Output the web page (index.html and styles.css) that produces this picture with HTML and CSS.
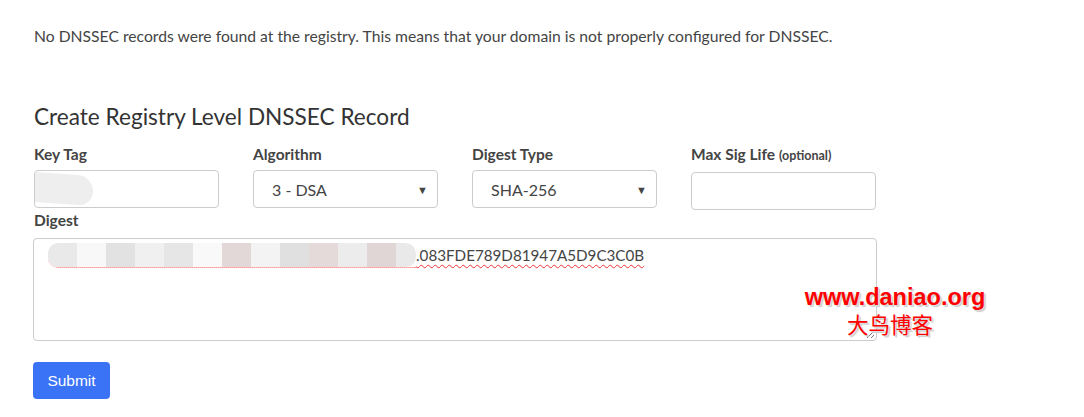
FILE: index.html
```html
<!DOCTYPE html>
<html>
<head>
<meta charset="utf-8">
<link rel="stylesheet" href="styles.css">
</head>
<body>
<div class="page">
  <p class="notice">No DNSSEC records were found at the registry. This means that your domain is not properly configured for DNSSEC.</p>
  <h2 class="title">Create Registry Level DNSSEC Record</h2>
  <div class="row">
    <div class="col">
      <div class="label">Key Tag</div>
      <div class="field"><span class="blob-key"></span></div>
    </div>
    <div class="col">
      <div class="label">Algorithm</div>
      <div class="field select"><span class="val">3 - DSA</span><span class="arrow">&#9660;</span></div>
    </div>
    <div class="col">
      <div class="label">Digest Type</div>
      <div class="field select"><span class="val">SHA-256</span><span class="arrow">&#9660;</span></div>
    </div>
    <div class="col">
      <div class="label">Max Sig Life <span class="opt">(optional)</span></div>
      <div class="field"></div>
    </div>
  </div>
  <div class="label digest-label">Digest</div>
  <div class="textarea">
    <div class="digest-line">
      <span class="blobs">
        <i class="b1"></i><i class="b2"></i><i class="b3"></i><i class="b4"></i><i class="b5"></i><i class="b6"></i><i class="b7"></i><i class="b8"></i><i class="b9"></i><i class="b10"></i><i class="b11"></i><i class="b12"></i><i class="b13"></i>
      </span><span class="digest-text">.083FDE789D81947A5D9C3C0B</span>
    </div>
    <svg class="grip" width="10" height="10" viewBox="0 0 10 10"><path d="M9 2 L2 9 M9 6 L6 9" stroke="#777" stroke-width="1"/></svg>
  </div>
  <button class="submit">Submit</button>
  <div class="watermark">
    <div class="wm-url">www.daniao.org</div>
    <div class="wm-cn">大鸟博客</div>
  </div>
</div>
</body>
</html>
```

FILE: styles.css
```css
html, body {
  margin: 0;
  background: #fff;
}
.page {
  position: relative;
  padding: 26px 0 0 34px;
  font-family: "Lato", "Liberation Sans", sans-serif;
  color: #444;
  width: 843px;
}
.notice {
  margin: 0;
  font-size: 15.7px;
  line-height: 20px;
  color: #444;
  white-space: nowrap;
}
.title {
  margin: 57px 0 0 0;
  font-size: 22.6px;
  line-height: 28px;
  font-weight: 400;
  color: #333;
}
.row {
  display: flex;
  gap: 34px;
  margin-top: 13px;
}
.col {
  width: 185px;
}
.label {
  font-size: 15.5px;
  line-height: 20px;
  font-weight: 700;
  color: #444;
  white-space: nowrap;
}
.opt {
  font-size: 12.5px;
  font-weight: 700;
}
.field {
  box-sizing: border-box;
  height: 38px;
  margin-top: 6px;
  border: 1px solid #ccc;
  border-radius: 4px;
  background: #fff;
  position: relative;
  overflow: hidden;
}
.select {
  display: flex;
  align-items: center;
  justify-content: space-between;
  padding: 0 9px 0 18px;
  font-size: 16px;
  color: #444;
}
.arrow {
  font-size: 11px;
  color: #444;
}
.blob-key {
  position: absolute;
  left: -4px;
  top: 3px;
  width: 62px;
  height: 30px;
  background: #eee;
  border-radius: 4px 16px 16px 4px;
  transform: skewY(4deg);
}
.digest-label {
  margin-top: 0;
}
.textarea {
  box-sizing: border-box;
  position: relative;
  height: 103px;
  width: 844px;
  margin-top: 8px;
  margin-left: -1px;
  border: 1px solid #ccc;
  border-radius: 4px;
  padding: 4px 0 0 14px;
}
.digest-line {
  display: flex;
  align-items: center;
  height: 24px;
}
.blobs {
  display: flex;
  height: 24px;
  border-bottom: 1px dotted #f55;
  border-radius: 10px 10px 0 10px;
  overflow: hidden;
}
.blobs i {
  display: block;
  width: 29px;
  height: 24px;
}
.b1 { background: #e9e9e9; }
.b2 { background: #f8f8f8; }
.b3 { background: #e2e2e2; }
.b4 { background: #f0f0f0; }
.b5 { background: #e6e6e6; }
.b6 { background: #f9f9f9; }
.b7 { background: #e3d8d8; }
.b8 { background: #f3f3f3; }
.b9 { background: #e0e0e0; }
.b10 { background: #e5dada; }
.b11 { background: #ececec; }
.b12 { background: #e1d6d6; }
.b13 { background: #e9e9e9; width: 20px !important; border-radius: 0 10px 10px 0; }
.digest-text {
  font-size: 15.2px;
  color: #444;
  text-decoration: underline wavy #e33;
  text-decoration-thickness: 1px;
  text-underline-offset: 3px;
}
.grip {
  position: absolute;
  right: 1px;
  bottom: 1px;
}
.submit {
  display: block;
  margin-top: 21px;
  margin-left: -1px;
  width: 77px;
  height: 37px;
  border: none;
  border-radius: 4px;
  background: #3a73f6;
  color: #fff;
  font-family: "Liberation Sans", sans-serif;
  font-size: 15.5px;
  padding: 0;
}
.watermark {
  position: absolute;
  left: 800px;
  top: 283px;
  text-align: center;
  width: 190px;
}
.wm-url {
  font-family: "Liberation Sans", sans-serif;
  font-weight: 700;
  font-size: 23.5px;
  line-height: 28px;
  color: #f00;
  text-shadow: 1px 1px 0 #ddd, 2px 2px 1px #ccc;
}
.wm-cn {
  font-family: "Noto Sans CJK SC", serif;
  font-size: 21.5px;
  line-height: 26px;
  color: #f00;
  margin-left: -10px;
  text-shadow: 1px 1px 0 #ddd, 2px 2px 1px #ccc;
}
```
